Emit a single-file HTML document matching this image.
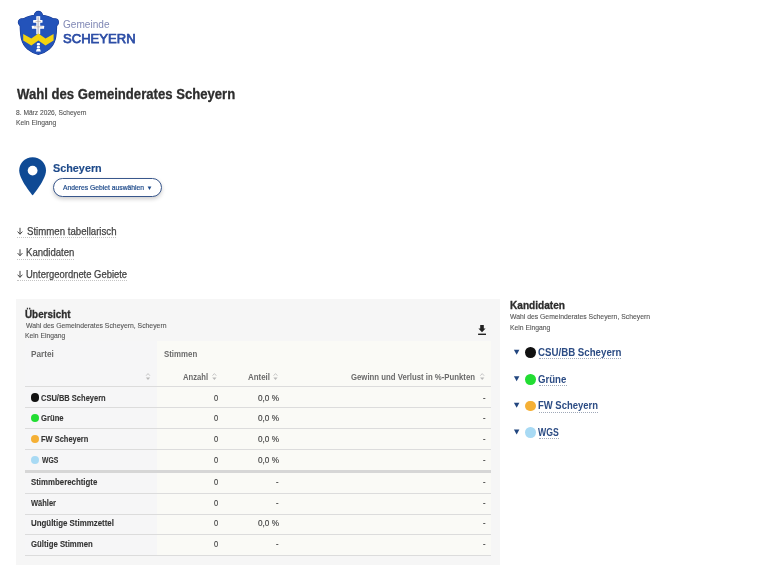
<!DOCTYPE html>
<html><head><meta charset="utf-8">
<style>
html,body{margin:0;padding:0;background:#fff;width:768px;height:576px;overflow:hidden;position:relative;font-family:"Liberation Sans",sans-serif;}
.a{position:absolute;white-space:nowrap;line-height:1;transform-origin:0 0;}
.ln{position:absolute;height:1px;background:#dcdcdc;}
.dot{position:absolute;border-radius:50%;}
</style></head><body>
<div id="w" style="position:absolute;left:0;top:0;width:768px;height:576px;background:#fff;filter:blur(0.35px);">

<!-- logo -->
<svg style="position:absolute;left:15px;top:8px" width="48" height="50" viewBox="0 0 48 50">
  <g fill="#1a3d95" stroke="#1a3d95" stroke-width="1.2"><circle cx="23.4" cy="7.4" r="4.0"/><circle cx="6.9" cy="14.3" r="3.5"/><circle cx="39.9" cy="14.3" r="3.5"/><path d="M5.0 13Q11 8.6 19.6 7.3L27.2 7.3Q35.8 8.6 41.8 13L41.6 17C41.4 28 40.6 35.5 34.2 41C30.6 44 27 45.6 23.4 46.3C19.8 45.6 16.2 44 12.6 41C6.2 35.5 5.4 28 5.2 17Z"/></g>
  <g fill="#2353ba"><circle cx="23.4" cy="7.4" r="4.0"/><circle cx="6.9" cy="14.3" r="3.5"/><circle cx="39.9" cy="14.3" r="3.5"/><path d="M5.0 13Q11 8.6 19.6 7.3L27.2 7.3Q35.8 8.6 41.8 13L41.6 17C41.4 28 40.6 35.5 34.2 41C30.6 44 27 45.6 23.4 46.3C19.8 45.6 16.2 44 12.6 41C6.2 35.5 5.4 28 5.2 17Z"/></g>
  <!-- cross -->
  <rect x="21.3" y="8.2" width="3.9" height="18" fill="#fff"/>
  <rect x="18.1" y="11.9" width="9.4" height="2.9" rx="0.5" fill="#fff"/>
  <rect x="16.9" y="17.8" width="12.2" height="3.0" rx="0.5" fill="#fff"/>
  <rect x="22.3" y="9.2" width="1.9" height="17" fill="#c8c9d2"/>
  <rect x="20.5" y="13.0" width="5.5" height="0.6" fill="#b9a89a"/>
  <rect x="19" y="18.6" width="8.5" height="0.6" fill="#b9a89a"/>
  <!-- zigzag -->
  <path d="M8.2 26.0L16.3 30.6L23.4 25.6L30.5 30.6L38.6 26.0L38.6 32.5L30.5 37.4L23.4 32.6L16.3 37.4L8.2 32.5Z" fill="#f3d30f"/>
  <!-- lower post -->
  <rect x="21.8" y="34.9" width="3.2" height="2.5" rx="1" fill="#fff"/>
  <rect x="21.8" y="38.1" width="3.2" height="2.3" rx="1" fill="#fff"/>
  <path d="M20.9 43.6L21.8 40.9L25 40.9L25.9 43.6Z" fill="#fff"/>
</svg>

<!-- pin -->
<svg style="position:absolute;left:18px;top:156px" width="30" height="40" viewBox="0 0 30 40">
<path d="M14.6 1.2C7.2 1.2 1.2 7.1 1.2 14.4C1.2 23.5 14.6 39.3 14.6 39.3C14.6 39.3 28 23.5 28 14.4C28 7.1 22 1.2 14.6 1.2Z" fill="#0f4a94"/>
<circle cx="14.6" cy="14.6" r="4.9" fill="#fff"/>
</svg>

<!-- button -->
<div style="position:absolute;left:53px;top:178px;width:106.8px;height:16.9px;border:1px solid #39578c;border-radius:10px;box-shadow:0 2px 4px rgba(0,0,0,.2);background:#fff;"></div>
<svg style="position:absolute;left:147px;top:186px" width="6" height="5" viewBox="0 0 6 5"><path d="M0.6 0.6L4.4 0.6L2.5 3.9Z" fill="#1e4a8a"/></svg>

<!-- link arrows & underlines -->
<svg style="position:absolute;left:17px;top:226px" width="8" height="60" viewBox="0 0 8 60">
  <g stroke="#444" stroke-width="1" fill="none">
    <path d="M3 1.8V8.2M0.6 5.6L3 8.2L5.4 5.6"/>
    <path d="M3 23.3V29.7M0.6 27.1L3 29.7L5.4 27.1"/>
    <path d="M3 44.9V51.3M0.6 48.7L3 51.3L5.4 48.7"/>
  </g>
</svg>
<div style="position:absolute;left:17px;top:237px;width:98.5px;height:0;border-top:1px dotted #c4c4c4;"></div>
<div style="position:absolute;left:17px;top:258.6px;width:57px;height:0;border-top:1px dotted #c4c4c4;"></div>
<div style="position:absolute;left:17px;top:280px;width:110px;height:0;border-top:1px dotted #c4c4c4;"></div>

<!-- overview box -->
<div style="position:absolute;left:16px;top:299px;width:484px;height:265.5px;background:#f6f6f6;"></div>
<!-- download icon -->
<svg style="position:absolute;left:477px;top:324px" width="10" height="12" viewBox="0 0 10 12">
  <path d="M3.2 0.9H6.8V4.6H8.6L5 8.2L1.4 4.6H3.2Z" fill="#222"/>
  <rect x="1.1" y="9.6" width="7.9" height="1.4" fill="#222"/>
</svg>
<!-- table bg -->
<div style="position:absolute;left:157px;top:341px;width:334px;height:214px;background:#fafaf6;"></div>
<div style="position:absolute;left:24.5px;top:341px;width:132.5px;height:214px;background:#f6f6f7;"></div>
<!-- table lines -->
<div class="ln" style="left:24.5px;width:466.5px;top:386px;"></div>
<div class="ln" style="left:24.5px;width:466.5px;top:407px;"></div>
<div class="ln" style="left:24.5px;width:466.5px;top:428px;"></div>
<div class="ln" style="left:24.5px;width:466.5px;top:449px;"></div>
<div class="ln" style="left:24.5px;width:466.5px;top:470px;height:2.5px;background:#d6d6d6;"></div>
<div class="ln" style="left:24.5px;width:466.5px;top:493px;"></div>
<div class="ln" style="left:24.5px;width:466.5px;top:513.5px;"></div>
<div class="ln" style="left:24.5px;width:466.5px;top:534px;"></div>
<div class="ln" style="left:24.5px;width:466.5px;top:554.5px;"></div>
<!-- sort icons -->
<svg style="position:absolute;left:0;top:370px" width="500" height="14" viewBox="0 370 500 14"><g transform="translate(148,0)"><path d="M-1.9 375.7L0 373.6L1.9 375.7" fill="none" stroke="#c6c6c6" stroke-width="1"/><path d="M-2.1 377.5H2.1L0 379.9Z" fill="#b8b8b8"/></g><g transform="translate(214.4,0)"><path d="M-1.9 375.7L0 373.6L1.9 375.7" fill="none" stroke="#c6c6c6" stroke-width="1"/><path d="M-2.1 377.5H2.1L0 379.9Z" fill="#b8b8b8"/></g><g transform="translate(275.5,0)"><path d="M-1.9 375.7L0 373.6L1.9 375.7" fill="none" stroke="#c6c6c6" stroke-width="1"/><path d="M-2.1 377.5H2.1L0 379.9Z" fill="#b8b8b8"/></g><g transform="translate(482.2,0)"><path d="M-1.9 375.7L0 373.6L1.9 375.7" fill="none" stroke="#c6c6c6" stroke-width="1"/><path d="M-2.1 377.5H2.1L0 379.9Z" fill="#b8b8b8"/></g></svg>
<!-- table dots -->
<div class="dot" style="left:30.9px;top:393.4px;width:8.2px;height:8.2px;background:#111;"></div>
<div class="dot" style="left:30.9px;top:414.3px;width:8.2px;height:8.2px;background:#22dd33;"></div>
<div class="dot" style="left:30.9px;top:435.2px;width:8.2px;height:8.2px;background:#f5b035;"></div>
<div class="dot" style="left:30.9px;top:456.1px;width:8.2px;height:8.2px;background:#a8daf4;"></div>

<!-- kandidaten -->
<svg style="position:absolute;left:512px;top:345px" width="10" height="100" viewBox="0 0 10 100">
  <g fill="#22467f">
    <path d="M1.9 4.7H7.4L4.65 9.7Z"/>
    <path d="M1.9 31.2H7.4L4.65 36.2Z"/>
    <path d="M1.9 57.8H7.4L4.65 62.8Z"/>
    <path d="M1.9 84.4H7.4L4.65 89.4Z"/>
  </g>
</svg>
<div class="dot" style="left:525.3px;top:347.3px;width:10.8px;height:10.8px;background:#111;"></div>
<div class="dot" style="left:525.3px;top:373.9px;width:10.8px;height:10.8px;background:#22dd33;"></div>
<div class="dot" style="left:525.3px;top:400.5px;width:10.8px;height:10.8px;background:#f5b035;"></div>
<div class="dot" style="left:525.3px;top:427.1px;width:10.8px;height:10.8px;background:#a8daf4;"></div>

<div style="position:absolute;left:538.5px;top:358px;width:82px;height:0;border-top:1px dotted #9fa8b8;"></div>
<div style="position:absolute;left:538.5px;top:385px;width:28px;height:0;border-top:1px dotted #9fa8b8;"></div>
<div style="position:absolute;left:538.5px;top:411.5px;width:59px;height:0;border-top:1px dotted #9fa8b8;"></div>
<div style="position:absolute;left:538.5px;top:438px;width:20.5px;height:0;border-top:1px dotted #9fa8b8;"></div>
<div class="a" style="left:63.20px;top:20.00px;font-size:10.3px;color:#8088b5;transform:scaleX(0.9800);">Gemeinde</div>
<div class="a" style="left:63.38px;top:32.00px;font-size:13.2px;color:#2d4ea6;transform:scaleX(0.9907);-webkit-text-stroke:0.75px #2d4ea6;">SCHEYERN</div>
<div class="a" style="left:16.60px;top:87.00px;font-size:14.0px;font-weight:bold;color:#2d2d2d;transform:scaleX(0.9368);-webkit-text-stroke:0.3px #2d2d2d;">Wahl des Gemeinderates Scheyern</div>
<div class="a" style="left:16.33px;top:110.00px;font-size:6.5px;color:#555;transform:scaleX(1.0222);-webkit-text-stroke:0.1px #555;">8. März 2026, Scheyern</div>
<div class="a" style="left:16.06px;top:120.00px;font-size:6.5px;color:#555;transform:scaleX(1.0427);-webkit-text-stroke:0.1px #555;">Kein Eingang</div>
<div class="a" style="left:53.28px;top:164.00px;font-size:10.2px;font-weight:bold;color:#1e4a8a;transform:scaleX(1.0621);-webkit-text-stroke:0.15px #1e4a8a;">Scheyern</div>
<div class="a" style="left:63.30px;top:185.00px;font-size:6.9px;color:#1e4a8a;transform:scaleX(0.9798);-webkit-text-stroke:0.2px #1e4a8a;">Anderes Gebiet auswählen</div>
<div class="a" style="left:26.51px;top:227.00px;font-size:10.0px;color:#444;transform:scaleX(0.9646);-webkit-text-stroke:0.25px #444;">Stimmen tabellarisch</div>
<div class="a" style="left:26.13px;top:248.00px;font-size:10.0px;color:#444;transform:scaleX(0.9566);-webkit-text-stroke:0.25px #444;">Kandidaten</div>
<div class="a" style="left:26.24px;top:270.00px;font-size:10.0px;color:#444;transform:scaleX(0.9423);-webkit-text-stroke:0.25px #444;">Untergeordnete Gebiete</div>
<div class="a" style="left:25.01px;top:310.00px;font-size:10.0px;font-weight:bold;color:#2d2d2d;transform:scaleX(0.9848);-webkit-text-stroke:0.3px #2d2d2d;">Übersicht</div>
<div class="a" style="left:25.60px;top:323.00px;font-size:6.5px;color:#555;transform:scaleX(1.0528);-webkit-text-stroke:0.1px #555;">Wahl des Gemeinderates Scheyern, Scheyern</div>
<div class="a" style="left:25.06px;top:333.00px;font-size:6.5px;color:#555;transform:scaleX(1.0427);-webkit-text-stroke:0.1px #555;">Kein Eingang</div>
<div class="a" style="left:30.91px;top:351.00px;font-size:8.2px;font-weight:bold;color:#6a6a6a;transform:scaleX(1.0027);">Partei</div>
<div class="a" style="left:163.54px;top:351.00px;font-size:8.2px;font-weight:bold;color:#6a6a6a;transform:scaleX(0.9598);">Stimmen</div>
<div class="a" style="left:183.05px;top:374.00px;font-size:8.2px;font-weight:bold;color:#6a6a6a;transform:scaleX(0.9328);">Anzahl</div>
<div class="a" style="left:247.54px;top:374.00px;font-size:8.2px;font-weight:bold;color:#6a6a6a;transform:scaleX(0.9656);">Anteil</div>
<div class="a" style="left:351.29px;top:374.00px;font-size:8.2px;font-weight:bold;color:#6a6a6a;transform:scaleX(0.9498);">Gewinn und Verlust in %-Punkten</div>
<div class="a" style="left:509.79px;top:301.00px;font-size:10.2px;font-weight:bold;color:#2d2d2d;transform:scaleX(0.9907);-webkit-text-stroke:0.3px #2d2d2d;">Kandidaten</div>
<div class="a" style="left:510.40px;top:314.00px;font-size:6.5px;color:#555;transform:scaleX(1.0491);-webkit-text-stroke:0.1px #555;">Wahl des Gemeinderates Scheyern, Scheyern</div>
<div class="a" style="left:509.86px;top:325.00px;font-size:6.5px;color:#555;transform:scaleX(1.0427);-webkit-text-stroke:0.1px #555;">Kein Eingang</div>
<div class="a" style="left:41.40px;top:394.00px;font-size:8.7px;font-weight:bold;color:#333;transform:scaleX(0.8641);-webkit-text-stroke:0.1px #333;">CSU/BB Scheyern</div>
<div class="a" style="left:214.12px;top:394.00px;font-size:8.3px;color:#444;transform:scaleX(0.9000);-webkit-text-stroke:0.15px #444;">0</div>
<div class="a" style="left:258.15px;top:394.00px;font-size:8.3px;color:#444;transform:scaleX(0.9888);-webkit-text-stroke:0.15px #444;">0,0 %</div>
<div class="a" style="left:483.13px;top:394.00px;font-size:8.3px;color:#444;transform:scaleX(0.9000);-webkit-text-stroke:0.15px #444;">-</div>
<div class="a" style="left:41.39px;top:414.00px;font-size:8.7px;font-weight:bold;color:#333;transform:scaleX(0.8824);-webkit-text-stroke:0.1px #333;">Grüne</div>
<div class="a" style="left:214.12px;top:414.00px;font-size:8.3px;color:#444;transform:scaleX(0.9000);-webkit-text-stroke:0.15px #444;">0</div>
<div class="a" style="left:258.15px;top:414.00px;font-size:8.3px;color:#444;transform:scaleX(0.9888);-webkit-text-stroke:0.15px #444;">0,0 %</div>
<div class="a" style="left:483.13px;top:414.00px;font-size:8.3px;color:#444;transform:scaleX(0.9000);-webkit-text-stroke:0.15px #444;">-</div>
<div class="a" style="left:41.25px;top:435.00px;font-size:8.7px;font-weight:bold;color:#333;transform:scaleX(0.8601);-webkit-text-stroke:0.1px #333;">FW Scheyern</div>
<div class="a" style="left:214.12px;top:435.00px;font-size:8.3px;color:#444;transform:scaleX(0.9000);-webkit-text-stroke:0.15px #444;">0</div>
<div class="a" style="left:258.15px;top:435.00px;font-size:8.3px;color:#444;transform:scaleX(0.9888);-webkit-text-stroke:0.15px #444;">0,0 %</div>
<div class="a" style="left:483.13px;top:435.00px;font-size:8.3px;color:#444;transform:scaleX(0.9000);-webkit-text-stroke:0.15px #444;">-</div>
<div class="a" style="left:41.70px;top:456.00px;font-size:8.7px;font-weight:bold;color:#333;transform:scaleX(0.7869);-webkit-text-stroke:0.1px #333;">WGS</div>
<div class="a" style="left:214.12px;top:456.00px;font-size:8.3px;color:#444;transform:scaleX(0.9000);-webkit-text-stroke:0.15px #444;">0</div>
<div class="a" style="left:258.15px;top:456.00px;font-size:8.3px;color:#444;transform:scaleX(0.9888);-webkit-text-stroke:0.15px #444;">0,0 %</div>
<div class="a" style="left:483.13px;top:456.00px;font-size:8.3px;color:#444;transform:scaleX(0.9000);-webkit-text-stroke:0.15px #444;">-</div>
<div class="a" style="left:31.09px;top:478.00px;font-size:8.7px;font-weight:bold;color:#333;transform:scaleX(0.9031);-webkit-text-stroke:0.1px #333;">Stimmberechtigte</div>
<div class="a" style="left:214.12px;top:478.00px;font-size:8.3px;color:#444;transform:scaleX(0.9000);-webkit-text-stroke:0.15px #444;">0</div>
<div class="a" style="left:276.43px;top:478.00px;font-size:8.3px;color:#444;transform:scaleX(0.9000);-webkit-text-stroke:0.15px #444;">-</div>
<div class="a" style="left:483.13px;top:478.00px;font-size:8.3px;color:#444;transform:scaleX(0.9000);-webkit-text-stroke:0.15px #444;">-</div>
<div class="a" style="left:31.25px;top:499.00px;font-size:8.7px;font-weight:bold;color:#333;transform:scaleX(0.8643);-webkit-text-stroke:0.1px #333;">Wähler</div>
<div class="a" style="left:214.12px;top:499.00px;font-size:8.3px;color:#444;transform:scaleX(0.9000);-webkit-text-stroke:0.15px #444;">0</div>
<div class="a" style="left:276.43px;top:499.00px;font-size:8.3px;color:#444;transform:scaleX(0.9000);-webkit-text-stroke:0.15px #444;">-</div>
<div class="a" style="left:483.13px;top:499.00px;font-size:8.3px;color:#444;transform:scaleX(0.9000);-webkit-text-stroke:0.15px #444;">-</div>
<div class="a" style="left:30.78px;top:519.00px;font-size:8.7px;font-weight:bold;color:#333;transform:scaleX(0.9087);-webkit-text-stroke:0.1px #333;">Ungültige Stimmzettel</div>
<div class="a" style="left:214.12px;top:519.00px;font-size:8.3px;color:#444;transform:scaleX(0.9000);-webkit-text-stroke:0.15px #444;">0</div>
<div class="a" style="left:258.15px;top:519.00px;font-size:8.3px;color:#444;transform:scaleX(0.9888);-webkit-text-stroke:0.15px #444;">0,0 %</div>
<div class="a" style="left:483.13px;top:519.00px;font-size:8.3px;color:#444;transform:scaleX(0.9000);-webkit-text-stroke:0.15px #444;">-</div>
<div class="a" style="left:30.94px;top:540.00px;font-size:8.7px;font-weight:bold;color:#333;transform:scaleX(0.8938);-webkit-text-stroke:0.1px #333;">Gültige Stimmen</div>
<div class="a" style="left:214.12px;top:540.00px;font-size:8.3px;color:#444;transform:scaleX(0.9000);-webkit-text-stroke:0.15px #444;">0</div>
<div class="a" style="left:276.43px;top:540.00px;font-size:8.3px;color:#444;transform:scaleX(0.9000);-webkit-text-stroke:0.15px #444;">-</div>
<div class="a" style="left:483.13px;top:540.00px;font-size:8.3px;color:#444;transform:scaleX(0.9000);-webkit-text-stroke:0.15px #444;">-</div>
<div class="a" style="left:538.01px;top:347.00px;font-size:11.0px;font-weight:bold;color:#2c4c84;transform:scaleX(0.8810);">CSU/BB Scheyern</div>
<div class="a" style="left:538.02px;top:374.00px;font-size:11.0px;font-weight:bold;color:#2c4c84;transform:scaleX(0.8748);">Grüne</div>
<div class="a" style="left:537.83px;top:400.00px;font-size:11.0px;font-weight:bold;color:#2c4c84;transform:scaleX(0.8602);">FW Scheyern</div>
<div class="a" style="left:538.40px;top:427.00px;font-size:11.0px;font-weight:bold;color:#2c4c84;transform:scaleX(0.7886);">WGS</div>
</div>
</body></html>
